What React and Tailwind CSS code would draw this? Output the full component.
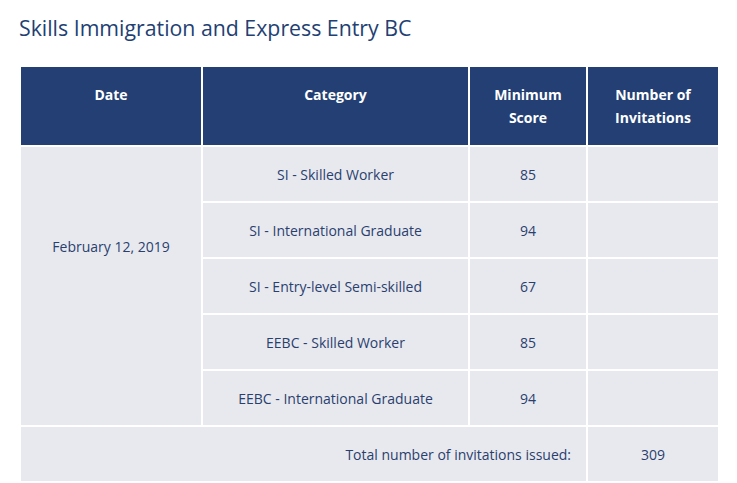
import React from 'react';

const rows = [
  { category: 'SI - Skilled Worker', score: '85' },
  { category: 'SI - International Graduate', score: '94' },
  { category: 'SI - Entry-level Semi-skilled', score: '67' },
  { category: 'EEBC - Skilled Worker', score: '85' },
  { category: 'EEBC - International Graduate', score: '94' },
];

const App = () => {
  return (
    <div className="w-[737px] h-[483px] bg-white overflow-hidden font-['Open_Sans',sans-serif] text-[#2a3f6e]">
      <h2 className="pl-[19px] pt-[13px] text-[21.3px] leading-[30px] text-[#233f73]">
        Skills Immigration and Express Entry BC
      </h2>

      <table className="ml-[19px] mt-[22px] table-fixed border-separate border-spacing-[2px] w-[701px] text-[14px]">
        <colgroup>
          <col className="w-[180px]" />
          <col className="w-[265px]" />
          <col className="w-[116px]" />
          <col className="w-[130px]" />
        </colgroup>
        <thead>
          <tr className="bg-[#233f73] text-white font-bold">
            <th className="h-[78px] align-top pt-[16px] px-3 leading-[23px]">Date</th>
            <th className="h-[78px] align-top pt-[16px] px-3 leading-[23px]">Category</th>
            <th className="h-[78px] align-top pt-[16px] px-3 leading-[23px]">Minimum Score</th>
            <th className="h-[78px] align-top pt-[16px] px-3 leading-[23px]">Number of Invitations</th>
          </tr>
        </thead>
        <tbody>
          {rows.map((row, i) => (
            <tr key={i}>
              {i === 0 && (
                <td rowSpan={5} className="bg-[#e8e9ee] text-center align-middle pb-[80px]">
                  February 12, 2019
                </td>
              )}
              <td className="h-[54px] bg-[#e8e9ee] text-center align-middle">{row.category}</td>
              <td className="h-[54px] bg-[#e8e9ee] text-center align-middle">{row.score}</td>
              <td className="h-[54px] bg-[#e8e9ee]"></td>
            </tr>
          ))}
          <tr>
            <td colSpan={3} className="h-[54px] bg-[#e8e9ee] text-right pr-[15px] align-middle">
              Total number of invitations issued:
            </td>
            <td className="h-[54px] bg-[#e8e9ee] text-center align-middle">309</td>
          </tr>
        </tbody>
      </table>
    </div>
  );
};

export default App;
